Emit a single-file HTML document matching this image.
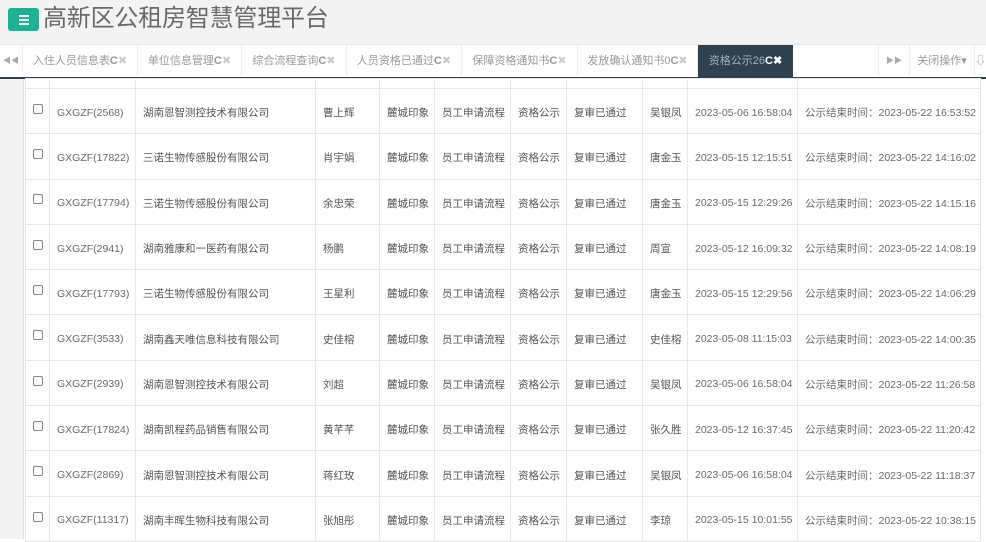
<!DOCTYPE html>
<html><head><meta charset="utf-8"><style>
*{margin:0;padding:0;box-sizing:border-box}
body{width:986px;height:539px;overflow:hidden;background:#fff;font-family:"Liberation Sans","Noto Sans CJK SC",sans-serif;position:relative}
.hdr{position:absolute;left:0;top:0;width:986px;height:44px;background:#f3f3f3}
.btn{position:absolute;left:8px;top:8px;width:31px;height:23px;background:#1ab394;border-radius:3px}
.btn i{position:absolute;left:11px;width:10px;height:2px;background:#fff}
.title{position:absolute;left:43px;top:3px;font-size:24px;color:#676a6c;line-height:32px;letter-spacing:-0.2px}
.tabs{position:absolute;left:0;top:44px;width:986px;height:35px;background:#fff;border-top:1px solid #e7e7e7;border-bottom:2px solid #2f4050}
.t{position:absolute;top:0;height:32px;line-height:32px;font-size:11px;color:#999;text-align:center;border-right:1px solid #eee}
.t b{color:#999;font-weight:bold}
.act{background:#2f4050;color:#a7b1c2;border:none}
.act b{color:#fff}
.strip{position:absolute;left:0;top:79px;width:24px;height:460px;background:#f3f3f3;border-right:1px solid #ddd}
table{position:absolute;left:25px;top:78px;border-collapse:collapse;table-layout:fixed;font-size:10.5px;color:#676a6c}
td{border:1px solid #e7e7e7;height:45.3px;padding:3px 0 0 7px;white-space:nowrap;overflow:hidden;vertical-align:middle}
tr.h td{height:10px;padding:0}
.cb{display:inline-block;width:10px;height:10px;border:1px solid #888;border-radius:2px;vertical-align:middle;margin-top:-8px}
td.n{color:#555}
</style></head><body>
<div class="hdr"><div class="btn"><i style="top:7px"></i><i style="top:11px"></i><i style="top:15px"></i></div>
<div class="title">高新区公租房智慧管理平台</div></div>
<div class="tabs">
<div class="t" style="left:0;width:23px;color:#aaa;font-size:8px">◀◀</div>
<div class="t" style="left:23px;width:115px">入住人员信息表<b>C</b><span style="color:#ccc">✖</span></div>
<div class="t" style="left:138px;width:104px">单位信息管理<b>C</b><span style="color:#ccc">✖</span></div>
<div class="t" style="left:242px;width:105px">综合流程查询<b>C</b><span style="color:#ccc">✖</span></div>
<div class="t" style="left:347px;width:115px">人员资格已通过<b>C</b><span style="color:#ccc">✖</span></div>
<div class="t" style="left:462px;width:116px">保障资格通知书<b>C</b><span style="color:#ccc">✖</span></div>
<div class="t" style="left:578px;width:120px">发放确认通知书0<b>C</b><span style="color:#ccc">✖</span></div>
<div class="t act" style="left:698px;width:95px">资格公示26<b>C✖</b></div>
<div class="t" style="left:878px;width:32px;border-left:1px solid #eee;font-size:8px;color:#aaa">▶▶</div>
<div class="t" style="left:910px;width:65px">关闭操作▾</div>
<div class="t" style="left:975px;width:11px;border:none">⇩</div>
</div>
<div class="strip"></div>
<table>
<colgroup><col style="width:24px"><col style="width:86px"><col style="width:180px"><col style="width:64px"><col style="width:55px"><col style="width:76px"><col style="width:56px"><col style="width:76px"><col style="width:45px"><col style="width:110px"><col style="width:183px"></colgroup>
<tr class="h"><td></td><td></td><td></td><td></td><td></td><td></td><td></td><td></td><td></td><td></td><td></td></tr>
<tr><td><span class="cb"></span></td><td>GXGZF(2568)</td><td class="n">湖南恩智测控技术有限公司</td><td class="n">曹上辉</td><td class="n">麓城印象</td><td class="n">员工申请流程</td><td class="n">资格公示</td><td class="n">复审已通过</td><td class="n">吴银凤</td><td>2023-05-06 16:58:04</td><td>公示结束时间：2023-05-22 16:53:52</td></tr>
<tr><td><span class="cb"></span></td><td>GXGZF(17822)</td><td class="n">三诺生物传感股份有限公司</td><td class="n">肖宇娟</td><td class="n">麓城印象</td><td class="n">员工申请流程</td><td class="n">资格公示</td><td class="n">复审已通过</td><td class="n">唐金玉</td><td>2023-05-15 12:15:51</td><td>公示结束时间：2023-05-22 14:16:02</td></tr>
<tr><td><span class="cb"></span></td><td>GXGZF(17794)</td><td class="n">三诺生物传感股份有限公司</td><td class="n">余忠荣</td><td class="n">麓城印象</td><td class="n">员工申请流程</td><td class="n">资格公示</td><td class="n">复审已通过</td><td class="n">唐金玉</td><td>2023-05-15 12:29:26</td><td>公示结束时间：2023-05-22 14:15:16</td></tr>
<tr><td><span class="cb"></span></td><td>GXGZF(2941)</td><td class="n">湖南雅康和一医药有限公司</td><td class="n">杨鹏</td><td class="n">麓城印象</td><td class="n">员工申请流程</td><td class="n">资格公示</td><td class="n">复审已通过</td><td class="n">周宣</td><td>2023-05-12 16:09:32</td><td>公示结束时间：2023-05-22 14:08:19</td></tr>
<tr><td><span class="cb"></span></td><td>GXGZF(17793)</td><td class="n">三诺生物传感股份有限公司</td><td class="n">王星利</td><td class="n">麓城印象</td><td class="n">员工申请流程</td><td class="n">资格公示</td><td class="n">复审已通过</td><td class="n">唐金玉</td><td>2023-05-15 12:29:56</td><td>公示结束时间：2023-05-22 14:06:29</td></tr>
<tr><td><span class="cb"></span></td><td>GXGZF(3533)</td><td class="n">湖南鑫天唯信息科技有限公司</td><td class="n">史佳榕</td><td class="n">麓城印象</td><td class="n">员工申请流程</td><td class="n">资格公示</td><td class="n">复审已通过</td><td class="n">史佳榕</td><td>2023-05-08 11:15:03</td><td>公示结束时间：2023-05-22 14:00:35</td></tr>
<tr><td><span class="cb"></span></td><td>GXGZF(2939)</td><td class="n">湖南恩智测控技术有限公司</td><td class="n">刘超</td><td class="n">麓城印象</td><td class="n">员工申请流程</td><td class="n">资格公示</td><td class="n">复审已通过</td><td class="n">吴银凤</td><td>2023-05-06 16:58:04</td><td>公示结束时间：2023-05-22 11:26:58</td></tr>
<tr><td><span class="cb"></span></td><td>GXGZF(17824)</td><td class="n">湖南凯程药品销售有限公司</td><td class="n">黄芊芊</td><td class="n">麓城印象</td><td class="n">员工申请流程</td><td class="n">资格公示</td><td class="n">复审已通过</td><td class="n">张久胜</td><td>2023-05-12 16:37:45</td><td>公示结束时间：2023-05-22 11:20:42</td></tr>
<tr><td><span class="cb"></span></td><td>GXGZF(2869)</td><td class="n">湖南恩智测控技术有限公司</td><td class="n">蒋红玫</td><td class="n">麓城印象</td><td class="n">员工申请流程</td><td class="n">资格公示</td><td class="n">复审已通过</td><td class="n">吴银凤</td><td>2023-05-06 16:58:04</td><td>公示结束时间：2023-05-22 11:18:37</td></tr>
<tr><td><span class="cb"></span></td><td>GXGZF(11317)</td><td class="n">湖南丰晖生物科技有限公司</td><td class="n">张旭彤</td><td class="n">麓城印象</td><td class="n">员工申请流程</td><td class="n">资格公示</td><td class="n">复审已通过</td><td class="n">李琼</td><td>2023-05-15 10:01:55</td><td>公示结束时间：2023-05-22 10:38:15</td></tr>
</table>
</body></html>
